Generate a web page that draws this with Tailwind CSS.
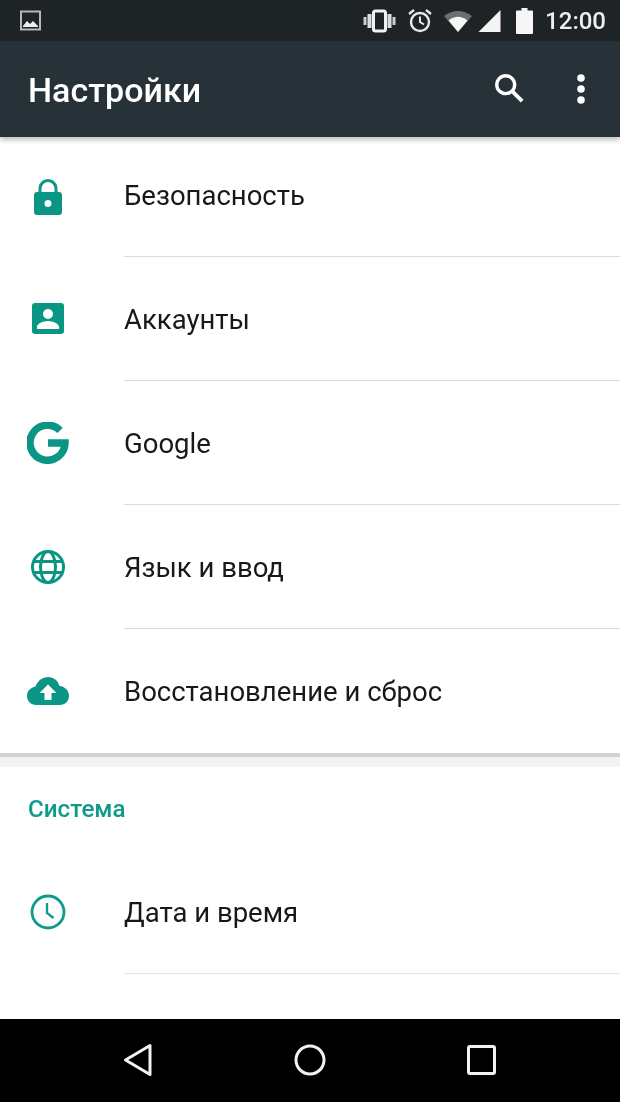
<!DOCTYPE html>
<html lang="ru">
<head>
<meta charset="utf-8">
<script src="https://cdn.jsdelivr.net/npm/@tailwindcss/browser@4"></script>
<title>Настройки</title>
</head>
<body class="bg-white">
<div class="w-[620px] h-[1102px] overflow-hidden flex flex-col bg-white font-['Roboto',sans-serif] text-[#181818] text-[27.5px] blur-[0.6px]">
  <!-- status bar -->
  <div class="h-[41px] shrink-0 bg-[#1e2326] flex items-center justify-between pl-[20px] pr-[14px] text-[#e8e8e8]">
    <svg class="w-[21px] h-[21px]" viewBox="0 0 21 21"><rect x="1" y="1.500" width="19" height="18" fill="none" stroke="#b5b8b9" stroke-width="2"/><path d="M3 16l4-5 3 3 3-3 5 5v1H3z" fill="#eee"/></svg>
    <div class="flex items-center">
      <svg class="w-[33px] h-[26px]" viewBox="0 0 32 26"><path d="M0 9h3v8H0zM29 9h3v8h-3z" fill="#ccc"/><path d="M4 6h4v14H4zM24 6h4v14h-4z" fill="#ddd"/><rect x="10" y="3" width="12" height="20" rx="2" fill="none" stroke="#f2f2f2" stroke-width="3"/></svg>
      <svg class="ml-[11px] w-[26px] h-[26px]" viewBox="0 0 26 26"><circle cx="13" cy="14" r="9" fill="none" stroke="#e8e8e8" stroke-width="2.400"/><path d="M13 8.500V14l4 2.500" fill="none" stroke="#e8e8e8" stroke-width="2"/><path d="M2 6l5-4M24 6l-5-4" stroke="#e8e8e8" stroke-width="2.400"/></svg>
      <svg class="ml-[10px] w-[30px] h-[24px]" viewBox="0 0 28 24"><path d="M0 7Q14-3 28 7L14 23z" fill="#6b6f71"/><path d="M4.500 11.500Q14 4 23.500 11.500L14 23z" fill="#f6f6f6"/></svg>
      <svg class="ml-[4px] w-[25px] h-[24px]" viewBox="0 0 22 24"><path d="M22 1v22H0z" fill="#f4f4f4"/></svg>
      <svg class="ml-[14px] w-[17px] h-[26px]" viewBox="0 0 17 26"><path d="M5.500 0h6v2.500H16a1 1 0 0 1 1 1V25a1 1 0 0 1-1 1H1a1 1 0 0 1-1-1V3.500a1 1 0 0 1 1-1h4.500z" fill="#f6f6f6"/></svg>
      <span class="ml-[12px] text-[24px] font-medium leading-none text-[#eeeeee]">12:00</span>
    </div>
  </div>
  <!-- app bar -->
  <header class="h-[96px] shrink-0 bg-[#263238] flex items-center pl-[28px] pr-[35px] text-white shadow-[0_3px_5px_rgba(0,0,0,0.25)] relative">
    <h1 class="flex-1 text-[34px] font-medium leading-none pt-[2px]">Настройки</h1>
    <svg class="w-[32px] h-[32px] mr-[52px] mb-[2px]" viewBox="0 0 34 34"><circle cx="13.500" cy="13.500" r="9.500" fill="none" stroke="#ffffff" stroke-width="3.600"/><path d="M20.500 20.500L31 31" stroke="#ffffff" stroke-width="4"/></svg>
    <svg class="w-[8px] h-[30px]" viewBox="0 0 8 30"><circle cx="4" cy="4" r="3.800" fill="#ffffff"/><circle cx="4" cy="15" r="3.800" fill="#ffffff"/><circle cx="4" cy="26" r="3.800" fill="#ffffff"/></svg>
  </header>
  <main class="flex-1 min-h-0 overflow-hidden flex flex-col">
    <div class="h-[119px] shrink-0 flex items-center">
      <div class="w-[124px] shrink-0 pl-[34px]"><svg class="block w-[28px] h-[36px]" viewBox="0 0 28 36"><path fill-rule="evenodd" fill="#0b9585" d="M14 0a9.500 9.500 0 0 1 9.500 9.500V13H25a3 3 0 0 1 3 3v17a3 3 0 0 1-3 3H3a3 3 0 0 1-3-3V16a3 3 0 0 1 3-3h1.500V9.500A9.500 9.500 0 0 1 14 0zm0 3a6.500 6.500 0 0 0-6.500 6.500V13h13V9.500A6.500 6.500 0 0 0 14 3zm0 18a3.500 3.500 0 1 0 0 7 3.500 3.500 0 0 0 0-7z"/></svg></div>
      <span class="leading-none pb-[1px]">Безопасность</span>
    </div>
    <div class="h-[1px] shrink-0 ml-[124px] bg-[#dcdcdc]"></div>
    <div class="h-[123px] shrink-0 flex items-center">
      <div class="w-[124px] shrink-0 pl-[32px]"><svg class="block w-[32px] h-[31px]" viewBox="0 0 32 31"><path fill-rule="evenodd" fill="#0b9585" d="M3 0h26a3 3 0 0 1 3 3v25a3 3 0 0 1-3 3H3a3 3 0 0 1-3-3V3a3 3 0 0 1 3-3zm13 6a5 5 0 1 0 0 10 5 5 0 0 0 0-10zM5 26h22v-2c0-4-7.500-6-11-6s-11 2-11 6z"/></svg></div>
      <span class="leading-none pt-[2px]">Аккаунты</span>
    </div>
    <div class="h-[1px] shrink-0 ml-[124px] bg-[#dcdcdc]"></div>
    <div class="h-[123px] shrink-0 flex items-center">
      <div class="w-[124px] shrink-0 pl-[27px]"><svg class="block w-[42px] h-[42px]" viewBox="0 0 42 42"><path fill="none" stroke="#0b9585" stroke-width="7.500" d="M33 8.500A17.500 17.500 0 1 0 38 21H21"/></svg></div>
      <span class="leading-none pt-[2px]">Google</span>
    </div>
    <div class="h-[1px] shrink-0 ml-[124px] bg-[#dcdcdc]"></div>
    <div class="h-[123px] shrink-0 flex items-center">
      <div class="w-[124px] shrink-0 pl-[31px]"><svg class="block w-[34px] h-[34px]" viewBox="0 0 34 34" fill="none" stroke="#0b9585" stroke-width="3"><circle cx="17" cy="17" r="15.500"/><ellipse cx="17" cy="17" rx="7.500" ry="15.500"/><path d="M3 11.500h28M3 22.500h28"/></svg></div>
      <span class="leading-none pt-[2px]">Язык и ввод</span>
    </div>
    <div class="h-[1px] shrink-0 ml-[124px] bg-[#dcdcdc]"></div>
    <div class="h-[124px] shrink-0 flex items-center">
      <div class="w-[124px] shrink-0 pl-[27px]"><svg class="block w-[42px] h-[28px]" viewBox="0 0 42 28"><path fill-rule="evenodd" fill="#0b9585" d="M21 0c5.500 0 10 3.500 11.500 9C38 9.500 42 13.500 42 19c0 5-4 9-9 9H9c-5 0-9-4-9-9 0-5 3.500-8.500 8.500-9.500C11 3.500 15.500 0 21 0zm0 7.500L12.500 16H17.500v7h7v-7h5z"/></svg></div>
      <span class="leading-none pt-[2px]">Восстановление и сброс</span>
    </div>
    <div class="h-[14px] shrink-0 bg-[#f3f3f3] border-t-[4px] border-[#d2d2d2]"></div>
    <div class="h-[70px] shrink-0 flex items-center pl-[28px] pt-[14px] text-[24.2px] font-medium text-[#0f9a8a] leading-none">Система</div>
    <div class="h-[136px] shrink-0 flex items-center pt-[14px]">
      <div class="w-[124px] shrink-0 pl-[30px]"><svg class="block w-[36px] h-[36px]" viewBox="0 0 36 36" fill="none" stroke="#0f9a8a"><circle cx="18" cy="18" r="16" stroke-width="2.800"/><path d="M17 9v10l6.500 5" stroke-width="2.400"/></svg></div>
      <span class="leading-none pt-[2px]">Дата и время</span>
    </div>
    <div class="h-[1px] shrink-0 ml-[124px] bg-[#e4e4e4]"></div>
  </main>
  <!-- nav bar -->
  <nav class="h-[83px] shrink-0 bg-black relative flex items-center pb-[2px]">
    <div class="w-full flex items-center pl-[123px]">
      <svg class="w-[30px] h-[34px]" viewBox="0 0 30 34" fill="none" stroke="#f2f2f2" stroke-width="3" stroke-linejoin="round"><path d="M27 2.500v29L2.500 17z"/></svg>
      <svg class="ml-[141px] w-[32px] h-[32px]" viewBox="0 0 32 32" fill="none" stroke="#f2f2f2" stroke-width="3"><circle cx="16" cy="16" r="14"/></svg>
      <svg class="ml-[141px] w-[29px] h-[30px]" viewBox="0 0 29 30" fill="none" stroke="#f2f2f2" stroke-width="3"><rect x="1.500" y="1.500" width="26" height="27" rx="1.500"/></svg>
    </div>
  </nav>
</div>
</body>
</html>
